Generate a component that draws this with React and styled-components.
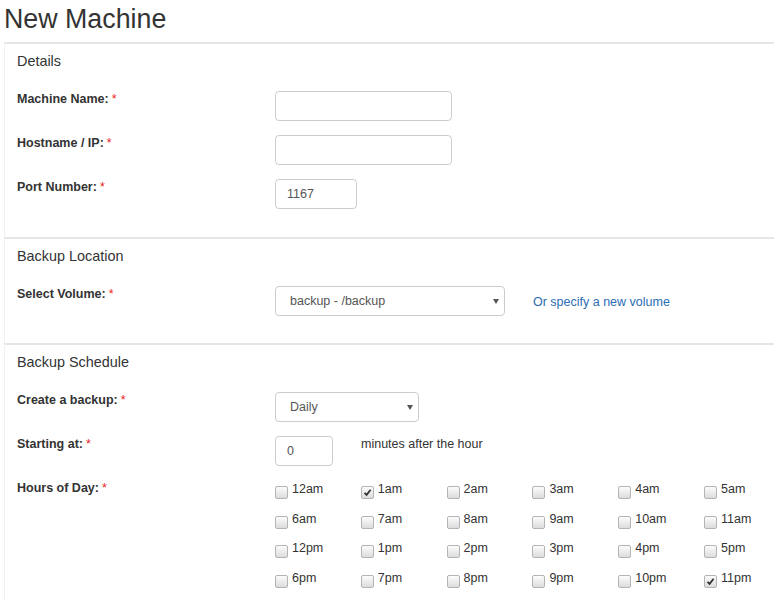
import React from "react";
import styled, { createGlobalStyle } from "styled-components";

const GlobalStyle = createGlobalStyle`
  body {
    margin: 0;
    background: #fff;
    font-family: "Liberation Sans", Arial, sans-serif;
    color: #333;
  }
`;

const Page = styled.div`
  padding: 0 0 0 4px;
`;

const Title = styled.h1`
  margin: 0 0 4px;
  font-size: 26.8px;
  font-weight: normal;
  line-height: 38px;
  color: #333;
`;

const Panel = styled.section`
  border-top: 2px solid #e6e6e6;
  border-left: 1px solid #f2f2f2;
  padding: 6px 0 ${(p) => p.$bottom || 28}px 12px;
`;

const PanelHeader = styled.h2`
  margin: 0 0 20px;
  padding-top: 1px;
  font-size: 14.4px;
  font-weight: normal;
  line-height: 20px;
  color: #333;
`;

const Row = styled.div`
  display: flex;
  align-items: flex-start;
  & + & {
    margin-top: 14px;
  }
`;

const Label = styled.label`
  width: 258px;
  flex-shrink: 0;
  font-size: 12.5px;
  font-weight: bold;
  line-height: 12.5px;
  padding-top: 2px;
`;

const Req = styled.span`
  color: #e22;
  font-weight: normal;
  margin-left: 3px;
`;

const TextInput = styled.input`
  box-sizing: border-box;
  width: ${(p) => p.$w}px;
  height: 30px;
  border: 1px solid #ccc;
  border-radius: 4px;
  padding: 0 11px;
  font-family: inherit;
  font-size: 12.5px;
  color: #555;
  outline: none;
`;

const SelectWrap = styled.div`
  position: relative;
  width: ${(p) => p.$w}px;
`;

const Select = styled.select`
  box-sizing: border-box;
  width: 100%;
  height: 30px;
  border: 1px solid #ccc;
  border-radius: 4px;
  padding: 0 14px;
  font-family: inherit;
  font-size: 12.5px;
  color: #555;
  background: #fff;
  appearance: none;
  outline: none;
`;

const Arrow = styled.span`
  position: absolute;
  right: 6px;
  top: 13px;
  width: 0;
  height: 0;
  border-left: 3.5px solid transparent;
  border-right: 3.5px solid transparent;
  border-top: 5px solid #555;
  pointer-events: none;
`;

const SideLink = styled.a`
  margin-left: 28px;
  margin-top: 10px;
  font-size: 12.5px;
  line-height: 12.5px;
  color: #2a6db5;
  text-decoration: none;
`;

const SideText = styled.span`
  margin-left: 28px;
  margin-top: 2px;
  font-size: 12.5px;
  line-height: 12.5px;
  color: #333;
`;

const HourGrid = styled.div`
  display: grid;
  grid-template-columns: repeat(6, 85.8px);
  grid-auto-rows: 29.7px;
  margin-top: 1px;
`;

const Hour = styled.label`
  display: flex;
  align-items: flex-start;
  font-size: 12.5px;
  line-height: 12.5px;
  color: #333;
`;

const Box = styled.span`
  box-sizing: border-box;
  width: 13px;
  height: 13px;
  margin-top: 5px;
  margin-right: 4px;
  border: 1px solid #b4b4b4;
  border-radius: 2px;
  background: linear-gradient(#fcfcfc, #dcdcdc);
  display: flex;
  align-items: center;
  justify-content: center;
`;

const HourText = styled.span`
  padding-top: 2px;
`;

const hours = [
  "12am", "1am", "2am", "3am", "4am", "5am",
  "6am", "7am", "8am", "9am", "10am", "11am",
  "12pm", "1pm", "2pm", "3pm", "4pm", "5pm",
  "6pm", "7pm", "8pm", "9pm", "10pm", "11pm",
];
const checked = ["1am", "11pm"];

const Check = () => (
  <svg width="9" height="9" viewBox="0 0 9 9">
    <path d="M1.5 4.8 L3.6 6.8 L7.6 1.8" fill="none" stroke="#333" strokeWidth="1.8" />
  </svg>
);

const Field = ({ label, children }) => (
  <Row>
    <Label>
      {label}
      <Req>*</Req>
    </Label>
    {children}
  </Row>
);

export default function App() {
  return (
    <Page>
      <GlobalStyle />
      <Title>New Machine</Title>

      <Panel>
        <PanelHeader>Details</PanelHeader>
        <Field label="Machine Name:">
          <TextInput $w={177} />
        </Field>
        <Field label="Hostname / IP:">
          <TextInput $w={177} />
        </Field>
        <Field label="Port Number:">
          <TextInput $w={82} defaultValue="1167" />
        </Field>
      </Panel>

      <Panel $bottom={27}>
        <PanelHeader>Backup Location</PanelHeader>
        <Field label="Select Volume:">
          <SelectWrap $w={230}>
            <Select defaultValue="backup">
              <option value="backup">backup - /backup</option>
            </Select>
            <Arrow />
          </SelectWrap>
          <SideLink href="#">Or specify a new volume</SideLink>
        </Field>
      </Panel>

      <Panel>
        <PanelHeader>Backup Schedule</PanelHeader>
        <Field label="Create a backup:">
          <SelectWrap $w={144}>
            <Select defaultValue="daily">
              <option value="daily">Daily</option>
            </Select>
            <Arrow />
          </SelectWrap>
        </Field>
        <Field label="Starting at:">
          <TextInput $w={58} defaultValue="0" />
          <SideText>minutes after the hour</SideText>
        </Field>
        <Field label="Hours of Day:">
          <HourGrid>
            {hours.map((h) => (
              <Hour key={h}>
                <Box>{checked.includes(h) && <Check />}</Box>
                <HourText>{h}</HourText>
              </Hour>
            ))}
          </HourGrid>
        </Field>
      </Panel>
    </Page>
  );
}
